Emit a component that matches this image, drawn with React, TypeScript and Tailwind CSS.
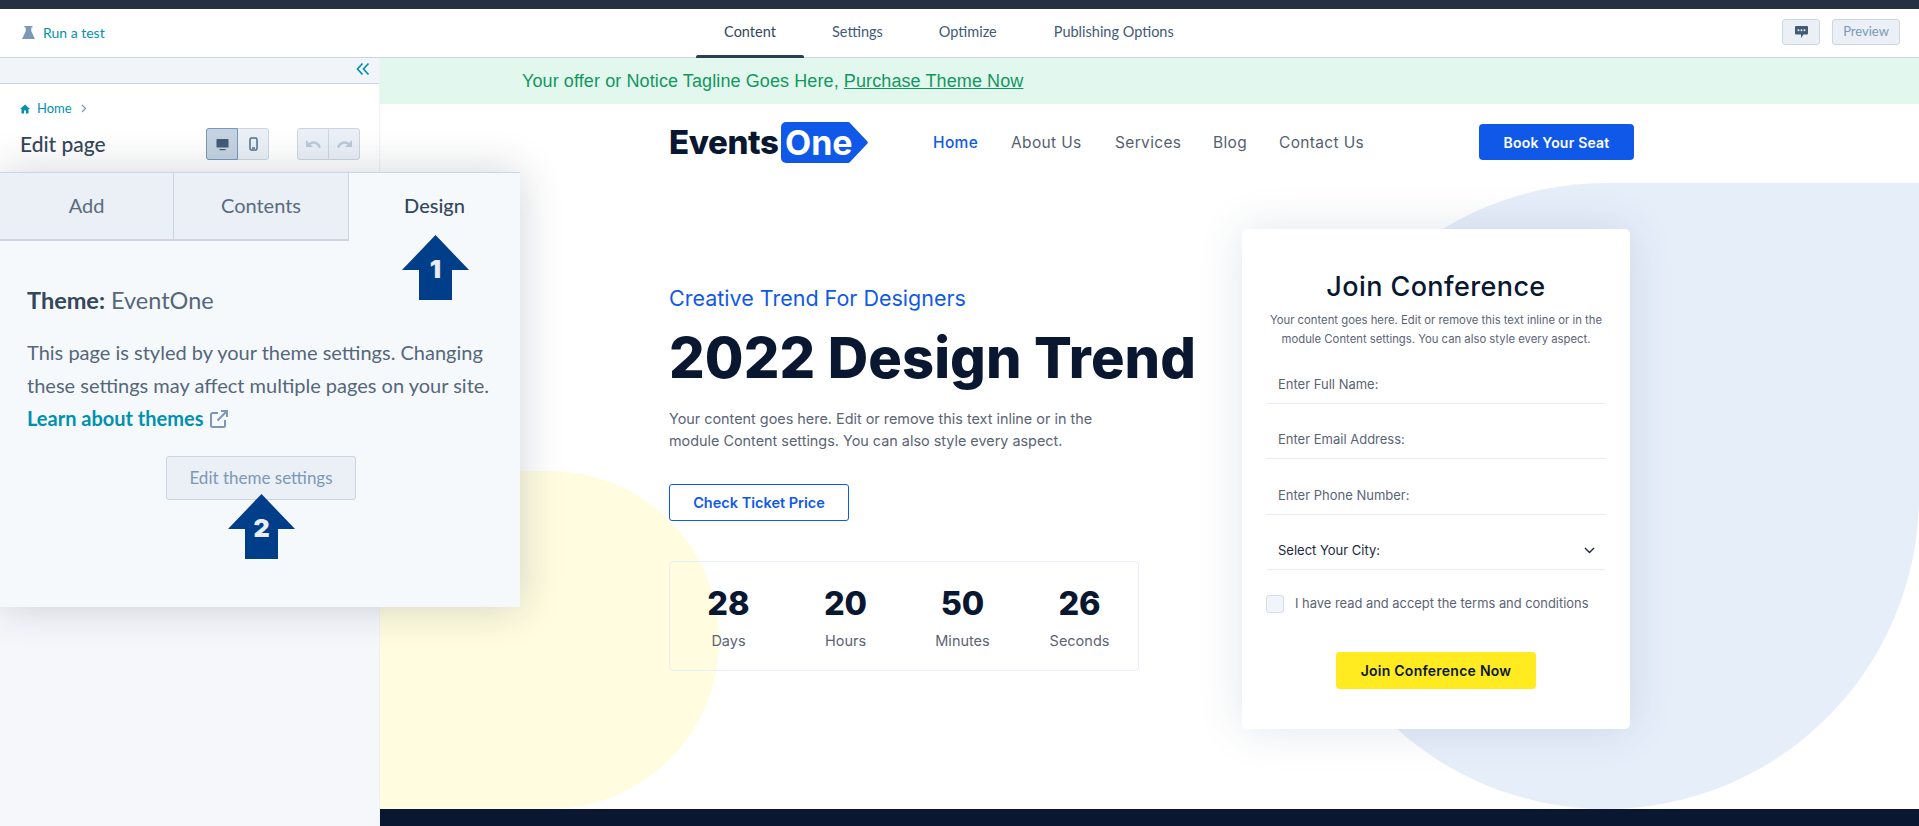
import React from "react";

const inter = "[font-family:Inter,sans-serif]";

function Arrow({ n, className }: { n: string; className: string }) {
  return (
    <div className={`absolute w-[67px] h-[65px] ${className}`}>
      <svg viewBox="0 0 67 65" className="absolute inset-0 w-full h-full">
        <polygon points="33.5,0 67,35 50,35 50,65 17,65 17,35 0,35" fill="#003e8a" />
      </svg>
      <span className="absolute inset-x-0 top-[21px] text-center text-[25px] leading-[26px] font-black text-[#e8edf5] [font-family:Inter,sans-serif]">
        {n}
      </span>
    </div>
  );
}

function Sidebar() {
  return (
    <aside className="w-[380px] shrink-0 bg-[#f5f7fb] border-r border-[#eef1f7] [font-family:Lato,sans-serif]">
      <div className="h-[26px] bg-[#f1f5f9] border-b border-[#cbd6e2] flex items-center justify-end pr-[9px] pb-[3px]">
        <svg width="14" height="14" viewBox="0 0 14 14" fill="none" stroke="#0091ae" strokeWidth="1.7">
          <path d="M6.5 1.5 1.5 7l5 5.5M12.5 1.5 7.5 7l5 5.5" />
        </svg>
      </div>
      <div className="h-[88px] bg-white pl-[20px] pr-[19px] pt-[16px]">
        <div className="flex items-center h-[17px] text-[13px] text-[#0091ae]">
          <svg width="10" height="10" viewBox="0 0 10 10" fill="#0091ae" className="mr-[7px]">
            <path d="M5 .5 0 5h1.5v4.5h2.5V6.500h2v3h2.500V5H10z" />
          </svg>
          Home
          <svg width="6" height="9" viewBox="0 0 6 9" fill="none" stroke="#7c98b6" strokeWidth="1.200" className="ml-[9px]">
            <path d="m1 1 3.500 3.500L1 8" />
          </svg>
        </div>
        <div className="flex items-center mt-[11px]">
          <h1 className="text-[21px] font-medium text-[#33475b] w-[186px]">Edit page</h1>
          <div className="flex h-[32px] w-[63px] rounded-[3px] border border-[#cbd6e2] bg-[#eaf0f6]">
            <div className="w-[32px] -m-px mr-0 h-[32px] rounded-l-[3px] border border-[#7c98b6] bg-[#c5d3e2] flex items-center justify-center">
              <svg width="13" height="13" viewBox="0 0 13 13" fill="#425b76">
                <path d="M1 1h11a.500.500 0 0 1 .5.500V9a.500.500 0 0 1-.5.500H1A.500.500 0 0 1 .5 9V1.500A.500.500 0 0 1 1 1ZM3.500 11h6v1.300h-6z" />
              </svg>
            </div>
            <div className="flex-1 flex items-center justify-center">
              <svg width="9" height="14" viewBox="0 0 9 14" fill="none" stroke="#516f90" strokeWidth="1.500">
                <rect x="1" y="1" width="7" height="12" rx="1.500" />
                <path d="M3 11h3" />
              </svg>
            </div>
          </div>
          <div className="flex h-[32px] w-[63px] ml-[28px] rounded-[3px] border border-[#cbd6e2] bg-[#eaf0f6] divide-x divide-[#cbd6e2]">
            <div className="flex-1 flex items-center justify-center">
              <svg width="17" height="11" viewBox="0 0 17 11" fill="#b9c9da">
                <path d="M1 1v7h7L5.500 5.500C8.500 3.800 12 4.800 14 9l2-.7C14 2.500 8.500.800 4 3.900Z" />
              </svg>
            </div>
            <div className="flex-1 flex items-center justify-center">
              <svg width="17" height="11" viewBox="0 0 17 11" fill="#b9c9da">
                <path d="M16 1v7H9l2.500-2.500C8.500 3.800 5 4.800 3 9l-2-.7C3 2.500 8.500.800 13 3.900Z" />
              </svg>
            </div>
          </div>
        </div>
      </div>
    </aside>
  );
}

function DesignPanel() {
  return (
    <section className="absolute left-0 top-[172px] w-[520px] h-[435px] bg-[#f6f9fc] border-t border-[#cbd6e2] shadow-[0_0_40px_rgba(30,40,60,0.2)] [font-family:Lato,sans-serif]">
      <div className="grid grid-cols-[174px_175px_171px] h-[68px] text-[20px]">
        <div className="flex items-center justify-center pb-[3px] bg-[#eaf0f6] border-r border-b-2 border-[#cbd6e2] text-[#5a6b7e]">Add</div>
        <div className="flex items-center justify-center pb-[3px] bg-[#eaf0f6] border-r border-b-2 border-[#cbd6e2] text-[#5a6b7e]">Contents</div>
        <div className="flex items-center justify-center pb-[5px] text-[#33475b] font-medium">Design</div>
      </div>
      <div className="pl-[27px] pt-[44px]">
        <p className="text-[23.500px] leading-[30px] text-[#54677b]">
          <strong className="font-bold text-[#33475b]">Theme:</strong> EventOne
        </p>
        <p className="mt-[21px] text-[20px] leading-[33px] text-[#54677b] w-[480px]">
          This page is styled by your theme settings. Changing these settings may affect multiple pages on your site.
          <br />
          <a className="font-bold text-[#0091ae] inline-flex items-center gap-[6px]">
            Learn about themes
            <svg width="18" height="18" viewBox="0 0 18 18" fill="none" stroke="#7c98b6" strokeWidth="2">
              <path d="M8 3H2.500A1.500 1.500 0 0 0 1 4.500v11A1.500 1.500 0 0 0 2.500 17h11a1.500 1.500 0 0 0 1.500-1.500V10M11 1h6v6M17 1 7.500 10.500" />
            </svg>
          </a>
        </p>
        <button className="block ml-[139px] mt-[21px] w-[190px] h-[44px] rounded-[3px] border border-[#cbd6e2] bg-[#eaf0f6] text-[17px] text-[#7c98b6]">
          Edit theme settings
        </button>
      </div>
    </section>
  );
}

function Logo() {
  return (
    <div className="flex items-center w-[264px]">
      <span className={`${inter} text-[33px] leading-[41px] font-extrabold tracking-[-0.4px] text-[#0a1730] w-[112px]`}>Events</span>
      <div className="relative w-[87px] h-[41px] flex items-center">
        <svg viewBox="0 0 87 41" className="absolute inset-0 w-full h-full">
          <path d="M5 0h62a3 3 0 0 1 2 1l17 18a2 2 0 0 1 0 3L69 40a3 3 0 0 1-2 1H5a5 5 0 0 1-5-5V5a5 5 0 0 1 5-5Z" fill="#1059e8" />
        </svg>
        <span className={`${inter} relative pl-[4px] text-[34px] leading-[41px] font-bold text-white`}>One</span>
      </div>
    </div>
  );
}

function Countdown() {
  const items = [
    ["28", "Days"],
    ["20", "Hours"],
    ["50", "Minutes"],
    ["26", "Seconds"],
  ];
  return (
    <div className="grid grid-cols-4 w-[470px] h-[110px] mt-[40px] rounded-[4px] border border-[#e8eef6] pt-[22px]">
      {items.map(([num, label]) => (
        <div key={label} className="text-center">
          <div className="text-[32.500px] leading-[40px] font-extrabold text-[#0a1730]">{num}</div>
          <div className="mt-[7px] text-[14.500px] leading-[20px] text-[#5b6475]">{label}</div>
        </div>
      ))}
    </div>
  );
}

function Field({ label, dark }: { label: string; dark?: boolean }) {
  return (
    <div className={`flex items-center justify-between h-[55.500px] pl-[12px] pr-[11px] pt-[18px] border-b border-[#e6edf7] text-[13px] ${dark ? "text-[#20283a]" : "text-[#5b6475]"}`}>
      {label}
      {dark && (
        <svg width="11" height="7" viewBox="0 0 11 7" fill="none" stroke="#20283a" strokeWidth="1.400">
          <path d="m1 1 4.500 4.500L10 1" />
        </svg>
      )}
    </div>
  );
}

function JoinCard() {
  return (
    <div className="relative w-[388px] h-[500px] mt-[48px] rounded-[5px] bg-white shadow-[0_0_45px_rgba(40,60,100,0.13)] px-[24px] pt-[38px]">
      <h2 className="text-center text-[27px] leading-[40px] font-medium tracking-[0.4px] text-[#0a1730]">Join Conference</h2>
      <p className="mt-[4px] text-center text-[11.300px] leading-[19px] text-[#5b6475] whitespace-nowrap">
        Your content goes here. Edit or remove this text inline or in the
        <br />
        module Content settings. You can also style every aspect.
      </p>
      <div className="-mt-[1px]">
        <Field label="Enter Full Name:" />
        <Field label="Enter Email Address:" />
        <Field label="Enter Phone Number:" />
        <Field label="Select Your City:" dark />
      </div>
      <label className="flex items-center mt-[24px] h-[20px] text-[12.900px] text-[#5b6475]">
        <span className="w-[18px] h-[18px] mr-[11px] rounded-[3px] border border-[#d5deeb] bg-[#f0f4fb]" />
        I have read and accept the terms and conditions
      </label>
      <button className="block mx-auto mt-[38px] w-[200px] h-[37px] rounded-[4px] bg-[#ffeb1f] text-[14px] font-semibold tracking-[0.25px] text-[#0a1730]">
        Join Conference Now
      </button>
    </div>
  );
}

function SitePage() {
  return (
    <main className={`relative flex-1 flex flex-col bg-white ${inter}`}>
      {/* background shapes */}
      <div className="absolute left-[913px] top-[125px] w-[626px] h-[626px] rounded-full rounded-tr-none bg-[#e6eefa]" />
      <div className="absolute left-0 top-[413px] w-[339px] h-[338px] rounded-r-full bg-[#fffcdf]" />

      <div className="relative h-[46px] shrink-0 bg-[#e2f8ef] pl-[142px] flex items-center text-[18px] tracking-[0.1px] text-[#12975d] [font-family:'Liberation_Sans',Arial,sans-serif]">
        Your offer or Notice Tagline Goes Here,&nbsp;<a className="underline">Purchase Theme Now</a>
      </div>

      <nav className="relative h-[77px] shrink-0 pl-[289px] flex items-center pb-[1px]">
        <Logo />
        <ul className="flex w-[546px] pt-[1px] text-[15.500px] tracking-[0.35px] text-[#565f70]">
          <li className="w-[78px] text-[#1059e8] font-medium">Home</li>
          <li className="w-[104px]">About Us</li>
          <li className="w-[98px]">Services</li>
          <li className="w-[66px]">Blog</li>
          <li>Contact Us</li>
        </ul>
        <button className="w-[155px] h-[36px] rounded-[4px] bg-[#1059e8] text-[14px] font-semibold tracking-[0.2px] text-white">Book Your Seat</button>
      </nav>

      <div className="relative flex-1 flex pl-[289px]">
        <div className="w-[573px] pt-[99px]">
          <p className="text-[21.500px] leading-[36px] text-[#1059e8]">Creative Trend For Designers</p>
          <h1 className="mt-[8px] text-[56px] leading-[68px] font-extrabold tracking-[0.1px] text-[#0a1730] whitespace-nowrap">2022 Design Trend</h1>
          <p className="mt-[16px] text-[14.400px] leading-[22px] text-[#5b6475] whitespace-nowrap">
            Your content goes here. Edit or remove this text inline or in the
            <br />
            module Content settings. You can also style every aspect.
          </p>
          <button className="mt-[32px] block w-[180px] h-[37px] rounded-[3px] border border-[#1059e8] text-[14.500px] font-semibold text-[#1059e8]">Check Ticket Price</button>
          <Countdown />
        </div>
        <JoinCard />
      </div>

      <div className="relative h-[17px] shrink-0 bg-[#0a1730]" />
    </main>
  );
}

export default function App() {
  return (
    <div className="relative w-[1919px] h-[826px] overflow-hidden flex flex-col bg-white">
      <div className="h-[9px] shrink-0 bg-[#253142]" />
      <header className="relative z-10 h-[49px] shrink-0 grid grid-cols-[696px_1fr_auto] items-center border-b border-[#cbd6e2] bg-white [font-family:Lato,sans-serif]">
        <div className="flex items-center pl-[22px] pb-[2px] text-[14px] text-[#0091ae] gap-[8px]">
          <svg width="13" height="13" viewBox="0 0 13 13" fill="#7c98b6">
            <path d="M2.500 0h8v1.500H9.300v3.700L13 13H0l3.700-7.800V1.500H2.500z" />
          </svg>
          Run a test
        </div>
        <div className="flex h-full pb-[2px] text-[14.500px] text-[#425b76]">
          <div className="relative w-[108px] flex items-center justify-center text-[#33475b]">
            Content
            <span className="absolute inset-x-0 bottom-[-3px] h-[3px] rounded-t-[2px] bg-[#2d3e50]" />
          </div>
          <div className="ml-[28px] flex items-center">Settings</div>
          <div className="ml-[56px] flex items-center">Optimize</div>
          <div className="ml-[57px] flex items-center">Publishing Options</div>
        </div>
        <div className="flex items-center pr-[19px] pb-[2px] gap-[12px]">
          <button className="w-[38px] h-[26px] rounded-[3px] border border-[#cbd6e2] bg-[#eaf0f6] flex items-center justify-center">
            <svg width="13" height="12" viewBox="0 0 13 12" fill="#425b76">
              <path d="M1 0h11a1 1 0 0 1 1 1v6.500a1 1 0 0 1-1 1H8.500L6 12V8.500H1a1 1 0 0 1-1-1V1a1 1 0 0 1 1-1Z" />
              <circle cx="3.500" cy="4.200" r="1" fill="#eaf0f6" />
              <circle cx="6.500" cy="4.200" r="1" fill="#eaf0f6" />
              <circle cx="9.500" cy="4.200" r="1" fill="#eaf0f6" />
            </svg>
          </button>
          <button className="w-[68px] h-[26px] rounded-[3px] border border-[#cbd6e2] bg-[#eaf0f6] text-[13px] text-[#7c98b6]">Preview</button>
        </div>
      </header>
      <div className="relative flex-1 flex min-h-0">
        <Sidebar />
        <SitePage />
      </div>
      <DesignPanel />
      <Arrow n="1" className="left-[402px] top-[235px]" />
      <Arrow n="2" className="left-[228px] top-[494px]" />
    </div>
  );
}
